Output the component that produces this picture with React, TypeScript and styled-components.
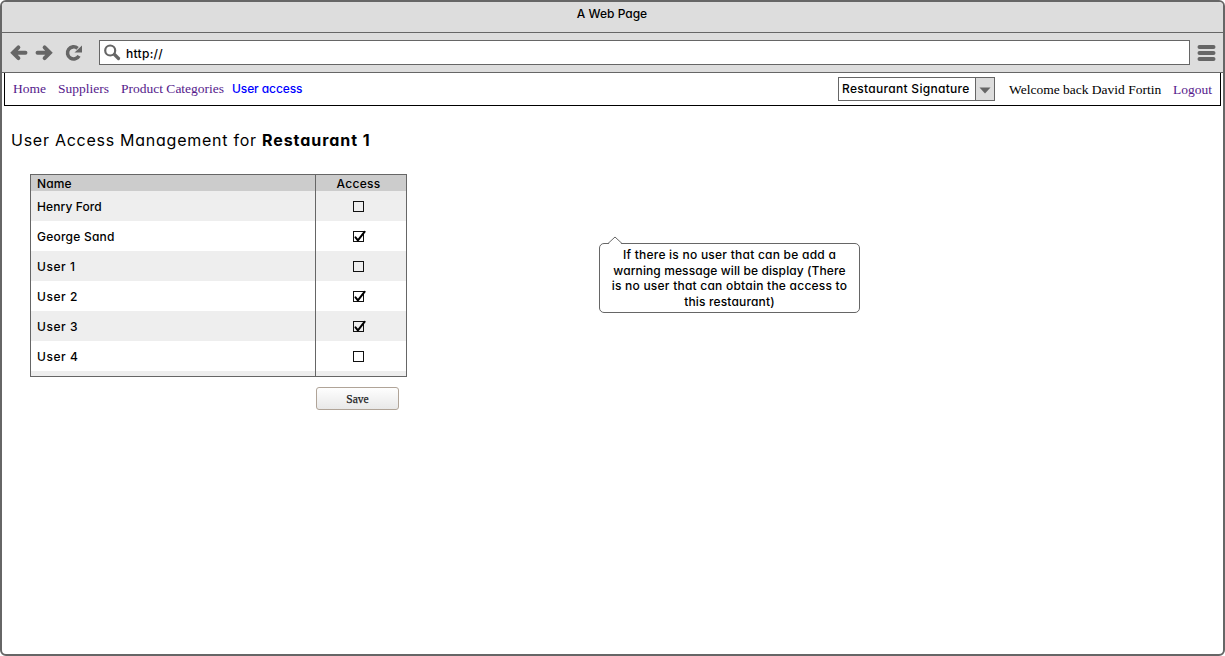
import React from 'react';
import styled, { createGlobalStyle } from 'styled-components';

const GlobalStyle = createGlobalStyle`
  * { box-sizing: border-box; }
  body {
    margin: 0;
    background: #fff;
    color: #000;
    font-family: Inter, 'Liberation Sans', sans-serif;
    font-feature-settings: 'cv11' 1;
    font-size: 12px;
    font-weight: 500;
    line-height: 16px;
  }
`;

const Browser = styled.div`
  display: flex;
  flex-direction: column;
  width: 1225px;
  height: 656px;
  border: 2px solid #666;
  border-radius: 6px;
  overflow: hidden;
`;

const TitleBar = styled.header`
  height: 31px;
  padding-top: 4px;
  padding-right: 1px;
  background: #ddd;
  border-bottom: 1px solid #666;
  text-align: center;
`;

const Toolbar = styled.div`
  display: flex;
  align-items: center;
  height: 40px;
  padding: 0 7px 0 8px;
  background: #ddd;
  border-bottom: 1px solid #666;
`;

const ToolIcon = styled.svg<{ $gap: number }>`
  flex: none;
  display: block;
  margin-right: ${(p) => p.$gap}px;
`;

const AddressBar = styled.div`
  display: flex;
  align-items: center;
  flex: 1;
  height: 25px;
  margin-right: 7px;
  padding-left: 4px;
  background: #fff;
  border: 1px solid #666;
`;

const Copy = styled.span<{ $spacing?: number; $weight?: number }>`
  white-space: pre;
  letter-spacing: ${(p) => p.$spacing ?? 0}px;
  font-weight: ${(p) => p.$weight ?? 500};
`;

const Address = styled(Copy)`
  padding-top: 2px;
`;

const Navigation = styled.nav`
  display: flex;
  align-items: flex-start;
  height: 33px;
  margin: 0 2px;
  padding: 8px 7px 0 8px;
  border: 1px solid #000;
  border-top: 0;
`;

const NavLink = styled.a<{ $width: number }>`
  width: ${(p) => p.$width}px;
  color: #551a8b;
  font: 13.5px/16px 'Liberation Serif', serif;
  white-space: nowrap;
`;

const CurrentLink = styled.a`
  color: #00f;
  letter-spacing: -0.1px;
  white-space: nowrap;
`;

const Account = styled.div`
  display: flex;
  margin-left: auto;
`;

const Select = styled.div`
  display: flex;
  width: 157px;
  height: 24px;
  margin: -4px 14px 0 0;
  border: 1px solid #666;
`;

const SelectValue = styled.div`
  flex: 1;
  padding: 3px 0 0 3px;
`;

const SelectArrow = styled.div`
  display: flex;
  align-items: center;
  justify-content: center;
  width: 19px;
  padding-top: 2px;
  background: #ddd;
  border-left: 1px solid #666;
`;

const Welcome = styled.span`
  width: 164px;
  padding-top: 1px;
  font: 13.5px/16px 'Liberation Serif', serif;
  white-space: nowrap;
`;

const Logout = styled(NavLink)`
  padding-top: 1px;
`;

const Heading = styled.h1`
  margin: 23px 0 0 9px;
  font-size: 16px;
  line-height: 22px;
  font-weight: 400;
`;

const Content = styled.main`
  display: flex;
  align-items: flex-start;
  padding: 23px 0 0 28px;
`;

const Panel = styled.section`
  width: 377px;
`;

const Table = styled.div`
  height: 203px;
  border: 1px solid #666;
  overflow: hidden;
`;

const Row = styled.div<{ $shade: string; $height: number }>`
  display: flex;
  height: ${(p) => p.$height}px;
  background: ${(p) => p.$shade};
`;

const NameCell = styled.div`
  display: flex;
  align-items: center;
  width: 285px;
  padding: 2px 0 0 6px;
  border-right: 1px solid #666;
`;

const AccessCell = styled.div<{ $top?: number }>`
  display: flex;
  align-items: center;
  justify-content: center;
  flex: 1;
  padding: ${(p) => p.$top ?? 0}px 5px 0 0;
`;

const SaveButton = styled.button`
  display: block;
  width: 83px;
  height: 23px;
  margin: 10px 0 0 286px;
  padding: 0;
  border: 1px solid #b0a498;
  border-radius: 3px;
  background: linear-gradient(#fefefe, #e8e8e8);
  color: #222;
  font: 11.5px/20px 'Liberation Serif', serif;
  -webkit-text-stroke: 0.25px #222;
`;

const Callout = styled.aside`
  position: relative;
  width: 261px;
  height: 70px;
  margin: 69px 0 0 192px;
  padding-top: 3px;
  border: 1px solid #666;
  border-radius: 5px;
  text-align: center;
  line-height: 15.7px;
`;

const CalloutLine = styled.div<{ $spacing: number }>`
  letter-spacing: ${(p) => p.$spacing}px;
  white-space: nowrap;
`;

const CalloutTip = styled.svg`
  position: absolute;
  left: 7px;
  top: -8px;
`;

const users = [
  { name: 'Henry Ford', access: false, spacing: 0.1 },
  { name: 'George Sand', access: true, spacing: 0.22 },
  { name: 'User 1', access: false, spacing: 0.55 },
  { name: 'User 2', access: true, spacing: 0.55 },
  { name: 'User 3', access: true, spacing: 0.55 },
  { name: 'User 4', access: false, spacing: 0.55 },
];

const notice = [
  { text: 'If there is no user that can be add a', spacing: 0.24 },
  { text: 'warning message will be display (There', spacing: 0.1 },
  { text: 'is no user that can obtain the access to', spacing: 0.23 },
  { text: 'this restaurant)', spacing: 0.15 },
];

function Checkbox({ checked }: { checked: boolean }) {
  return (
    <svg width="17" height="16" viewBox="0 0 17 16">
      <rect x="3.5" y="3.5" width="10" height="10" fill="none" stroke="#111" />
      {checked && (
        <path d="M5.5 9.3l2.4 3L14.7 3.7" fill="none" stroke="#000" strokeWidth="2" strokeLinecap="round" />
      )}
    </svg>
  );
}

function Arrow({ flip, gap }: { flip?: boolean; gap: number }) {
  return (
    <ToolIcon $gap={gap} width="18" height="18" viewBox="0 0 18 18">
      <path
        d="M8.4 3.4L3 8.8l5.4 5.4M3.5 8.8h12"
        transform={flip ? 'translate(18 0) scale(-1 1)' : undefined}
        fill="none"
        stroke="#666"
        strokeWidth="3.9"
        strokeLinecap="round"
        strokeLinejoin="miter"
      />
    </ToolIcon>
  );
}

export default function App() {
  return (
    <>
      <GlobalStyle />
      <Browser>
        <TitleBar>
          <Copy>A Web Page</Copy>
        </TitleBar>
        <Toolbar>
          <Arrow gap={7} />
          <Arrow flip gap={12} />
          <ToolIcon $gap={16} width="18" height="18" viewBox="0 0 18 18">
            <path d="M14 11.8A6.1 6.1 0 1 1 12.6 4.3" fill="none" stroke="#666" strokeWidth="3.6" />
            <path d="M17 1.5V8.5H9.5z" fill="#666" />
          </ToolIcon>
          <AddressBar>
            <ToolIcon $gap={5} width="17" height="17" viewBox="0 0 17 17">
              <circle cx="6.2" cy="6.5" r="5" fill="none" stroke="#666" strokeWidth="2.2" />
              <path d="M10.5 10.5l4 4" stroke="#666" strokeWidth="3.2" strokeLinecap="round" />
            </ToolIcon>
            <Address $spacing={0.3}>http://</Address>
          </AddressBar>
          <ToolIcon $gap={0} width="19" height="18" viewBox="0 0 19 18">
            <path d="M2.5 3h14M2.5 9h14M2.5 15h14" stroke="#666" strokeWidth="4" strokeLinecap="round" />
          </ToolIcon>
        </Toolbar>
        <Navigation>
          <NavLink $width={45}>Home</NavLink>
          <NavLink $width={63}>Suppliers</NavLink>
          <NavLink $width={111}>Product Categories</NavLink>
          <CurrentLink>User access</CurrentLink>
          <Account>
            <Select>
              <SelectValue>
                <Copy $spacing={0.3}>Restaurant Signature</Copy>
              </SelectValue>
              <SelectArrow>
                <svg width="12" height="7" viewBox="0 0 12 7">
                  <path d="M0.5 0.5h11L6 6.5z" fill="#666" />
                </svg>
              </SelectArrow>
            </Select>
            <Welcome>Welcome back David Fortin</Welcome>
            <Logout $width={40}>Logout</Logout>
          </Account>
        </Navigation>
        <Heading>
          <Copy $weight={400} $spacing={0.74}>{'User Access Management for '}</Copy>
          <Copy $weight={700} $spacing={0.95}>Restaurant 1</Copy>
        </Heading>
        <Content>
          <Panel>
            <Table>
              <Row $shade="#ccc" $height={16}>
                <NameCell>
                  <Copy $spacing={0.1}>Name</Copy>
                </NameCell>
                <AccessCell $top={2}>
                  <Copy $spacing={0.3}>Access</Copy>
                </AccessCell>
              </Row>
              {users.map((user, index) => (
                <Row key={user.name} $shade={index % 2 ? '#fff' : '#eee'} $height={30}>
                  <NameCell>
                    <Copy $spacing={user.spacing}>{user.name}</Copy>
                  </NameCell>
                  <AccessCell>
                    <Checkbox checked={user.access} />
                  </AccessCell>
                </Row>
              ))}
              <Row $shade="#eee" $height={5}>
                <NameCell />
                <AccessCell />
              </Row>
            </Table>
            <SaveButton>Save</SaveButton>
          </Panel>
          <Callout>
            <CalloutTip width="16" height="9" viewBox="0 0 16 9">
              <path d="M1 8.5L8 1l7 7.5" fill="#fff" />
              <path d="M1 7.5L8 1l7 6.5" fill="none" stroke="#666" />
            </CalloutTip>
            {notice.map((line) => (
              <CalloutLine key={line.text} $spacing={line.spacing}>
                {line.text}
              </CalloutLine>
            ))}
          </Callout>
        </Content>
      </Browser>
    </>
  );
}
